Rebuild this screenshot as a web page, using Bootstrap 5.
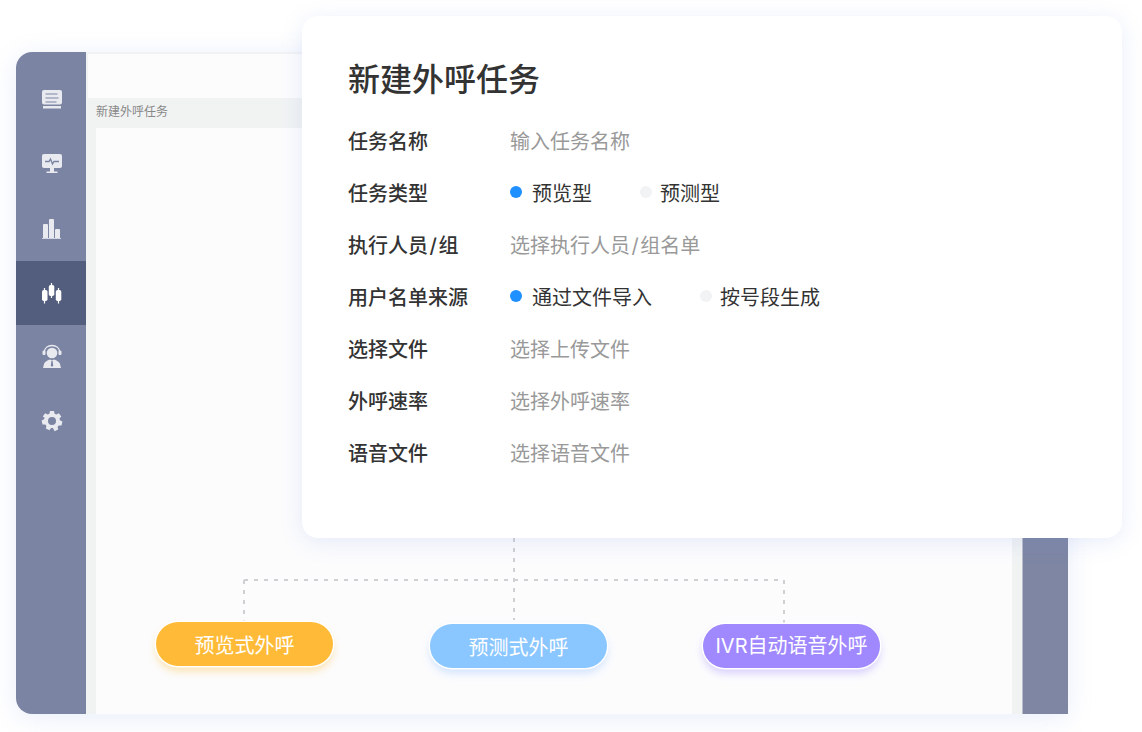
<!DOCTYPE html>
<html lang="zh-CN">
<head>
    <meta charset="UTF-8">
    <meta name="viewport" content="width=device-width, initial-scale=1.0">
    <title>新建外呼任务</title>
    <link href="https://cdn.jsdelivr.net/npm/bootstrap@5.3.0/dist/css/bootstrap.min.css" rel="stylesheet">
    <style>
        html, body {
            height: 100%;
            margin: 0;
        }
        body {
            background: #fff;
            font-family: Inter, "Noto Sans CJK SC", "Liberation Sans", sans-serif;
            overflow: hidden;
            position: relative;
            padding: 52px 0 0 16px;
        }
        .app-window {
            width: 1052px;
            height: 662px;
            border-radius: 16px 0 0 16px;
            box-shadow: 0 4px 26px rgba(110, 145, 225, .16);
            overflow: hidden;
        }
        .side-nav {
            width: 70px;
            padding-top: 16px;
            background: #7c84a3;
        }
        .side-item {
            height: 64px;
            padding-left: 2px;
            color: #e8eaf0;
        }
        .side-item.active-item {
            margin-top: 1px;
            background: #535d7d;
            color: #fff;
        }
        .main-pane {
            width: 936px;
            background: #f1f3f3;
            padding-top: 2px;
        }
        .top-blank {
            height: 44px;
            margin-left: 2px;
            background: #fcfcfd;
        }
        .crumb-bar {
            height: 30px;
            padding: 0 0 2px 10px;
            font-size: 12px;
            color: #888;
        }
        .tree-area {
            position: relative;
            margin: 0 10px;
            height: 586px;
            background: #fcfcfd;
        }
        .tree-lines {
            position: absolute;
            left: 0;
            top: 0;
        }
        .tree-node {
            position: absolute;
            width: 177px;
            height: 44px;
            border-radius: 22px;
            color: #fff;
            font-size: 20px;
            white-space: nowrap;
        }
        .node-orange {
            left: 60px;
            top: 494px;
            padding-top: 3px;
            background: #ffbb38;
            box-shadow: 0 0 0 1.5px #fff, 0 5px 9px rgba(255, 187, 56, .4);
        }
        .node-blue {
            left: 334px;
            top: 496px;
            padding-top: 3px;
            background: #8ac6ff;
            box-shadow: 0 0 0 1.5px #fff, 0 5px 9px rgba(110, 170, 255, .3);
        }
        .node-purple {
            left: 607px;
            top: 496px;
            background: #a088ff;
            box-shadow: 0 0 0 1.5px #fff, 0 5px 9px rgba(160, 136, 255, .4);
        }
        .right-strip {
            width: 46px;
            background: #7e86a4;
            border-left: 1px solid #b9bdc9;
        }
        .task-panel {
            position: absolute;
            left: 302px;
            top: 16px;
            width: 820px;
            height: 522px;
            padding: 41px 46px;
            background: #fff;
            border-radius: 16px;
            box-shadow: 0 4px 22px rgba(110, 145, 225, .16);
            color: #333;
        }
        .panel-title {
            margin: 0 0 13px;
            height: 46px;
            line-height: 46px;
            font-size: 32px;
            font-weight: 500;
            color: #333;
        }
        .field-row {
            height: 52px;
            font-size: 20px;
        }
        .field-label {
            width: 162px;
            font-weight: 500;
        }
        .field-hint {
            color: #999;
        }
        .slash-mark {
            margin: 0 1.500px;
        }
        .radio-opt {
            color: #333;
        }
        .radio-dot {
            display: inline-block;
            width: 12px;
            height: 12px;
            border-radius: 50%;
            margin-top: -4px;
            background: #f2f3f5;
        }
        .radio-dot.on {
            background: #1e90ff;
        }
        .opt-first {
            width: 130px;
        }
        .opt-first-wide {
            width: 190px;
        }
        .dot-gap {
            margin-left: 10px;
        }
        .dot-gap-off {
            margin-left: 8px;
        }
    </style>
</head>
<body>
    <div class="app-window d-flex">
        <!-- Sidebar -->
        <nav class="side-nav flex-shrink-0">
            <div class="side-item d-flex align-items-center justify-content-center">
                <svg width="22" height="22" viewBox="0 0 22 22"><rect x="1" y="1" width="20" height="14.500" rx="2" fill="currentColor"/><path d="M4.500 5h12M4.500 9h13M4.500 13h11" stroke="#7c84a3" stroke-width="1"/><path d="M2 17h18v2.500H2z" fill="currentColor"/></svg>
            </div>
            <div class="side-item d-flex align-items-center justify-content-center">
                <svg width="22" height="22" viewBox="0 0 22 22"><rect x="1" y="1" width="20" height="14" rx="2" fill="currentColor"/><path d="M4 8.500h4l1.500-2.500 2 5 1.500-2.500h5" fill="none" stroke="#7c84a3" stroke-width="1.300"/><path d="M9 15h4v3.500H9zM5.500 18.500h11V20h-11z" fill="currentColor"/></svg>
            </div>
            <div class="side-item d-flex align-items-center justify-content-center">
                <svg width="22" height="22" viewBox="0 0 22 22"><path d="M2 8a1 1 0 0 1 1-1h3a1 1 0 0 1 1 1v13H2zM8 3a1 1 0 0 1 1-1h3a1 1 0 0 1 1 1v18H8zM14 13a1 1 0 0 1 1-1h3a1 1 0 0 1 1 1v8h-5z" fill="currentColor"/><path d="M1 21h19v1H1z" fill="currentColor" opacity=".8"/></svg>
            </div>
            <div class="side-item active-item d-flex align-items-center justify-content-center">
                <svg width="22" height="22" viewBox="0 0 22 22"><path d="M3.500 6v15.500M10.500 1v15M17.500 6v15.500" stroke="currentColor" stroke-width="1.200"/><rect x="1" y="8" width="5.500" height="11" rx="1.800" fill="currentColor"/><rect x="7.800" y="3" width="5.500" height="11" rx="1.800" fill="currentColor"/><rect x="14.800" y="8" width="5.500" height="11" rx="1.800" fill="currentColor"/></svg>
            </div>
            <div class="side-item d-flex align-items-center justify-content-center">
                <svg width="22" height="26" viewBox="0 0 22 26"><path d="M3.200 8.500C3.500 4 6.800 1.500 11 1.500s7.500 2.500 7.800 7" fill="none" stroke="currentColor" stroke-width="1.300"/><rect x="1.500" y="6.500" width="3" height="4.500" rx="1.200" fill="currentColor"/><rect x="17.500" y="6.500" width="3" height="4.500" rx="1.200" fill="currentColor"/><circle cx="11" cy="9" r="5.300" fill="currentColor"/><path d="M2 24l1-4c.6-2 3-3.500 6-4.500l2 1 2-1c3 1 5.400 2.500 6 4.500l1 4z" fill="currentColor"/><path d="M10.400 17h1.200l.6 4.500-1.200 1.500-1.200-1.500z" fill="#7c84a3"/></svg>
            </div>
            <div class="side-item d-flex align-items-center justify-content-center">
                <svg width="22" height="22" viewBox="0 0 22 22"><path transform="translate(0 1)" fill="currentColor" fill-rule="evenodd" d="M9 0h4l.6 2.700 1.700.8 2.500-1.200 2.500 3.100-1.800 2.100.4 1.800 2.500 1.200-.9 3.900-2.800.1-1.100 1.400.6 2.700-3.600 1.700L11.900 17h-1.800l-1.700 2.300-3.600-1.700.6-2.700-1.100-1.400-2.800-.1-.9-3.900 2.500-1.200.4-1.800L1.700 5.400l2.500-3.100 2.500 1.200 1.700-.8zM11 6a4 4 0 1 0 0 8 4 4 0 0 0 0-8z"/></svg>
            </div>
        </nav>

        <!-- Main area behind the panel -->
        <div class="main-pane flex-shrink-0">
            <div class="top-blank"></div>
            <div class="crumb-bar d-flex align-items-center">新建外呼任务</div>
            <div class="tree-area">
                <svg class="tree-lines" width="916" height="586">
                    <path d="M418 410V492M148 452H688M148 452V494M688 452V496" fill="none" stroke="#cfd0d3" stroke-width="2" stroke-dasharray="4 6"/>
                </svg>
                <div class="tree-node node-orange d-flex align-items-center justify-content-center">预览式外呼</div>
                <div class="tree-node node-blue d-flex align-items-center justify-content-center">预测式外呼</div>
                <div class="tree-node node-purple d-flex align-items-center justify-content-center">IVR自动语音外呼</div>
            </div>
        </div>

        <div class="right-strip flex-shrink-0"></div>
    </div>

    <!-- Floating form panel -->
    <div class="task-panel">
        <h1 class="panel-title">新建外呼任务</h1>
        <div class="field-row d-flex align-items-center">
            <div class="field-label">任务名称</div>
            <div class="field-hint">输入任务名称</div>
        </div>
        <div class="field-row d-flex align-items-center">
            <div class="field-label">任务类型</div>
            <div class="radio-opt opt-first d-flex align-items-center"><span class="radio-dot on"></span><span class="dot-gap">预览型</span></div>
            <div class="radio-opt d-flex align-items-center"><span class="radio-dot"></span><span class="dot-gap-off">预测型</span></div>
        </div>
        <div class="field-row d-flex align-items-center">
            <div class="field-label">执行人员<span class="slash-mark">/</span>组</div>
            <div class="field-hint">选择执行人员<span class="slash-mark">/</span>组名单</div>
        </div>
        <div class="field-row d-flex align-items-center">
            <div class="field-label">用户名单来源</div>
            <div class="radio-opt opt-first-wide d-flex align-items-center"><span class="radio-dot on"></span><span class="dot-gap">通过文件导入</span></div>
            <div class="radio-opt d-flex align-items-center"><span class="radio-dot"></span><span class="dot-gap-off">按号段生成</span></div>
        </div>
        <div class="field-row d-flex align-items-center">
            <div class="field-label">选择文件</div>
            <div class="field-hint">选择上传文件</div>
        </div>
        <div class="field-row d-flex align-items-center">
            <div class="field-label">外呼速率</div>
            <div class="field-hint">选择外呼速率</div>
        </div>
        <div class="field-row d-flex align-items-center">
            <div class="field-label">语音文件</div>
            <div class="field-hint">选择语音文件</div>
        </div>
    </div>
    <script src="https://cdn.jsdelivr.net/npm/bootstrap@5.3.0/dist/js/bootstrap.bundle.min.js"></script>
</body>
</html>
